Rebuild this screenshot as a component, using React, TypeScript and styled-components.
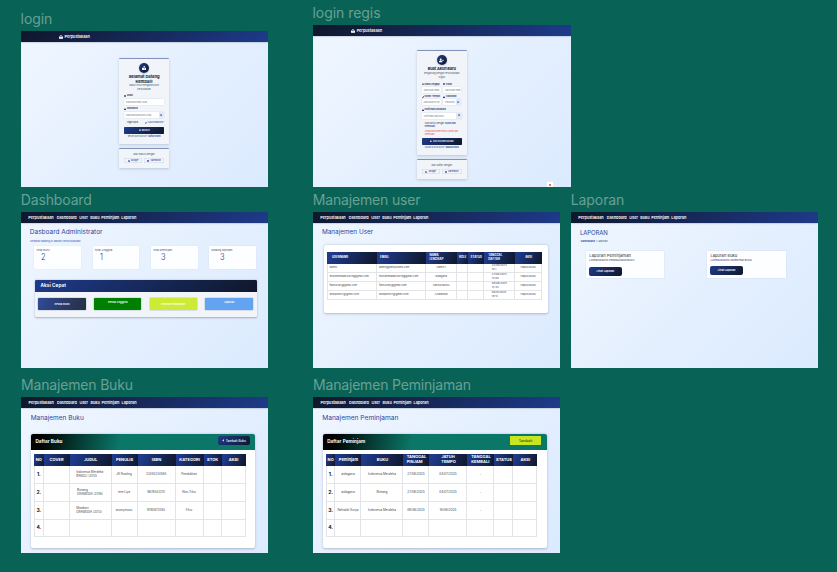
import React from "react";
import styled, { createGlobalStyle } from "styled-components";
import { FaBookReader, FaUserPlus, FaEnvelope, FaLock, FaEye, FaGoogle, FaFacebook, FaSignInAlt, FaKey, FaUser, FaPlus, FaPhone } from "react-icons/fa";

const Global = createGlobalStyle`
  * { box-sizing: border-box; }
  html, body { margin: 0; background: #086256; overflow: hidden; }
  svg { display: block; flex: none; }
`;

const NAVY = "linear-gradient(135deg, #1e3a8a, #0f172a)";

const Canvas = styled.main`
  position: relative;
  width: 837px;
  height: 572px;
  background: #086256;
  font-family: Inter, "Open Sans", sans-serif;
  overflow: hidden;
`;

const Artboard = styled.section<{ $x: number; $y: number }>`
  position: absolute;
  left: ${(p) => p.$x}px;
  top: ${(p) => p.$y}px;
`;

const ArtboardName = styled.h2<{ $ls?: number }>`
  margin: 0 0 4px;
  height: 16px;
  font-size: 14px;
  line-height: 16px;
  font-weight: 400;
  letter-spacing: ${(p) => p.$ls ?? 0}px;
  color: #68a094;
  white-space: nowrap;
`;

const Screen = styled.div<{ $w: number; $h: number }>`
  width: ${(p) => p.$w}px;
  height: ${(p) => p.$h}px;
  background: linear-gradient(135deg, #eff6ff, #dbeafe);
  overflow: hidden;
  position: relative;
`;

const Nav = styled.nav<{ $pad: number }>`
  display: flex;
  align-items: center;
  height: 11px;
  padding-left: ${(p) => p.$pad}px;
  background: linear-gradient(135deg, #0f172a, #1e3a8a);
  box-shadow: 0 0.5px 1.5px rgba(15, 23, 42, 0.35);
  color: #fff;
  font-size: 3.8px;
  font-weight: 600;
  white-space: nowrap;
`;

const NavItem = styled.span<{ $w: number }>`
  width: ${(p) => p.$w}px;
  flex: none;
`;

const Brand = styled.span`
  display: flex;
  align-items: center;
  gap: 1.6px;
`;

const Line = styled.div<{ $mt?: number; $h?: number; $size?: number; $c?: string; $b?: number; $ls?: number; $pl?: number; $center?: boolean }>`
  display: flex;
  align-items: center;
  justify-content: ${(p) => (p.$center ? "center" : "flex-start")};
  gap: 0.8px;
  margin-top: ${(p) => p.$mt ?? 0}px;
  padding-left: ${(p) => p.$pl ?? 0}px;
  height: ${(p) => p.$h ?? 4}px;
  line-height: ${(p) => p.$h ?? 4}px;
  font-size: ${(p) => p.$size ?? 2.2}px;
  font-weight: ${(p) => p.$b ?? 400};
  letter-spacing: ${(p) => p.$ls ?? 0}px;
  color: ${(p) => p.$c ?? "#475569"};
  white-space: nowrap;
`;

const Link = styled.span`
  color: #1e3a8a;
  font-weight: 600;
`;

/* Sign-in and sign-up */
const AuthColumn = styled.div<{ $left: number; $top: number }>`
  width: 50px;
  margin: ${(p) => p.$top}px 0 0 ${(p) => p.$left}px;
`;

const AuthCard = styled.div<{ $h: number; $mt?: number }>`
  height: ${(p) => p.$h}px;
  margin-top: ${(p) => p.$mt ?? 0}px;
  padding: 0 5px;
  border-top: 1px solid #8292bb;
  border-radius: 1px;
  background: #f1f5f9;
  box-shadow: 0 1px 3px rgba(15, 23, 42, 0.18);
`;

const Avatar = styled.div`
  display: flex;
  align-items: center;
  justify-content: center;
  width: 10px;
  height: 10px;
  margin: 4.3px auto 0;
  border-radius: 50%;
  background: ${NAVY};
  color: #fff;
  box-shadow: 0 0.5px 1.5px rgba(30, 58, 138, 0.4);
`;

const Fields = styled.div<{ $cols: string; $gap?: number; $mt?: number }>`
  display: grid;
  grid-template-columns: ${(p) => p.$cols};
  column-gap: ${(p) => p.$gap ?? 0}px;
  margin-top: ${(p) => p.$mt ?? 0}px;
`;

const Input = styled.div`
  display: flex;
  align-items: center;
  justify-content: space-between;
  height: 6px;
  padding-left: 2px;
  border-radius: 0.8px;
  background: #fff;
  box-shadow: 0 0 0 0.4px #dde4ee;
  color: #757b86;
  font-size: 2px;
  white-space: nowrap;
  overflow: hidden;
`;

const Eye = styled.span`
  display: flex;
  align-items: center;
  justify-content: center;
  width: 5.5px;
  height: 100%;
  background: #e2e9f8;
  color: #1e3a8a;
`;

const Submit = styled.div<{ $mt: number }>`
  display: flex;
  align-items: center;
  justify-content: center;
  gap: 1px;
  height: 6.5px;
  margin-top: ${(p) => p.$mt}px;
  border-radius: 0.8px;
  background: ${NAVY};
  color: #fff;
  font-size: 2.1px;
  font-weight: 600;
  white-space: nowrap;
`;

const Social = styled.div`
  display: flex;
  align-items: center;
  justify-content: center;
  gap: 0.8px;
  height: 5px;
  border-radius: 0.8px;
  box-shadow: inset 0 0 0 0.5px #cbd6ea;
  color: #1e3a8a;
  font-size: 2.2px;
  font-weight: 500;
`;

const ScrollBadge = styled.div`
  position: absolute;
  right: 18px;
  bottom: 0;
  width: 6px;
  height: 5px;
  padding: 2px;
  background: #fff;
  &::after {
    content: "";
    display: block;
    width: 2px;
    height: 2px;
    background: #e8794a;
  }
`;

/* Dashboard */
const Stats = styled.div`
  display: flex;
  gap: 11.5px;
  margin: 2.5px 0 0 13.5px;
`;

const Stat = styled.div`
  width: 46.8px;
  height: 23.5px;
  padding: 3.2px 0 0 2px;
  border-radius: 0.7px;
  background: #fdfeff;
  box-shadow: 0 0 1px rgba(100, 120, 160, 0.3);
`;

const StatValue = styled.div<{ $pl: number }>`
  padding-left: ${(p) => p.$pl}px;
  font-size: 9.4px;
  line-height: 10px;
  font-weight: 300;
  color: #1e3a8a;
  & > span {
    display: inline-block;
    transform: scaleX(0.8);
    transform-origin: left;
  }
`;

const Actions = styled.div`
  width: 222px;
  height: 37px;
  margin: 10.5px 0 0 14px;
  border-radius: 1.3px;
  background: #f1f5f9;
  box-shadow: 0 0.7px 2px rgba(15, 23, 42, 0.3);
  overflow: hidden;
`;

const ActionsHead = styled.div`
  height: 12px;
  padding-left: 5.7px;
  background: ${NAVY};
  color: #fff;
  font-size: 4.6px;
  line-height: 12px;
  font-weight: 700;
  letter-spacing: 0.12px;
`;

const ActionRow = styled.div`
  display: grid;
  grid-template-columns: repeat(4, 47.5px);
  gap: 8.2px;
  padding: 6.3px 3.5px;
`;

const Action = styled.div<{ $bg: string; $low?: boolean }>`
  height: 12.3px;
  padding-top: ${(p) => (p.$low ? 1.6 : 0.4)}px;
  border-radius: 0.8px;
  background: ${(p) => p.$bg};
  box-shadow: 0 0 0 0.5px rgba(120, 145, 190, 0.45);
  color: #fff;
  font-size: 2.65px;
  line-height: ${(p) => (p.$low ? 10 : 9.5)}px;
  font-weight: 600;
  text-align: center;
`;

/* Tables */
const Panel = styled.div<{ $ml: number; $mt: number; $h: number }>`
  width: 224.3px;
  height: ${(p) => p.$h}px;
  margin: ${(p) => p.$mt}px 0 0 ${(p) => p.$ml}px;
  border-radius: 2px;
  background: #fff;
  box-shadow: 0 0.7px 2.5px rgba(15, 23, 42, 0.25);
  overflow: hidden;
`;

const PanelHead = styled.div`
  display: flex;
  align-items: center;
  justify-content: space-between;
  height: 16.2px;
  padding: 0 5.5px 0 4.5px;
  background: linear-gradient(100deg, #000 4%, #0b7768 40%, #0b7768);
  color: #fff;
  font-size: 4.6px;
  font-weight: 700;
  letter-spacing: 0.07px;
`;

const HeadButton = styled.div<{ $lime?: boolean }>`
  display: flex;
  align-items: center;
  justify-content: center;
  gap: 1.3px;
  width: 31.8px;
  height: 9px;
  margin-bottom: 2px;
  border-radius: ${(p) => (p.$lime ? 0 : 2)}px;
  background: ${(p) => (p.$lime ? "#c8e620" : NAVY)};
  color: ${(p) => (p.$lime ? "#33401c" : "#fff")};
  font-size: ${(p) => (p.$lime ? 3.6 : 3.1)}px;
  font-weight: 500;
  letter-spacing: 0;
`;

const Table = styled.div<{ $ml: number; $mt: number }>`
  margin: ${(p) => p.$mt}px 0 0 ${(p) => p.$ml}px;
`;

const Row = styled.div<{ $cols: string; $h: number }>`
  display: grid;
  grid-template-columns: ${(p) => p.$cols};
  height: ${(p) => p.$h}px;
`;

const Th = styled.div<{ $size: number; $left?: number }>`
  display: flex;
  align-items: center;
  justify-content: ${(p) => (p.$left ? "flex-start" : "center")};
  padding-left: ${(p) => p.$left ?? 0}px;
  background: linear-gradient(110deg, #1e3a8a 10%, #0f172a);
  color: #fff;
  font-size: ${(p) => p.$size}px;
  line-height: 1.2;
  font-weight: 700;
  white-space: pre;
`;

const Td = styled.div<{ $size: number; $left?: number; $strong?: boolean }>`
  display: flex;
  align-items: center;
  justify-content: ${(p) => (p.$left ? "flex-start" : "center")};
  padding-left: ${(p) => p.$left ?? 0}px;
  border-right: 1px solid #e3e4e8;
  border-bottom: 1px solid #e3e4e8;
  color: ${(p) => (p.$strong ? "#111" : "#44474d")};
  font-size: ${(p) => (p.$strong ? 5 : p.$size)}px;
  font-weight: ${(p) => (p.$strong ? 700 : 400)};
  line-height: 1.45;
  white-space: pre;
  &:first-child {
    border-left: 1px solid #e3e4e8;
  }
`;

/* Reports */
const Reports = styled.div`
  display: flex;
  gap: 42.5px;
  margin: 7.5px 0 0 15px;
`;

const Report = styled.div`
  width: 78.7px;
  height: 27.5px;
  padding: 3.6px 0 0 3.5px;
  background: #fdfeff;
  box-shadow: 0 0 1px rgba(100, 120, 160, 0.3);
`;

const ReportButton = styled.div<{ $mt: number }>`
  width: 32.3px;
  height: 9px;
  margin-top: ${(p) => p.$mt}px;
  border-radius: 2px;
  background: ${NAVY};
  color: #fff;
  font-size: 2.7px;
  line-height: 9px;
  font-weight: 600;
  text-align: center;
`;

const MainNav = ({ pad = 7.5 }: { pad?: number }) => (
  <Nav $pad={pad}>
    <NavItem $w={28.4}>Perpustakaan</NavItem>
    <NavItem $w={22.6}>Dashboard</NavItem>
    <NavItem $w={11}>User</NavItem>
    <NavItem $w={11}>Buku</NavItem>
    <NavItem $w={20}>Peminjam</NavItem>
    <NavItem $w={16}>Laporan</NavItem>
  </Nav>
);

const AuthNav = ({ pad }: { pad: number }) => (
  <Nav $pad={pad}>
    <Brand>
      <FaBookReader size={4} />
      Perpustakaan
    </Brand>
  </Nav>
);

const SocialCard = ({ title }: { title: string }) => (
  <AuthCard $h={20.3} $mt={3.7}>
    <Line $mt={3.9} $h={4} $center $size={2.3}>{title}</Line>
    <Fields $cols="17.8px 20px" $gap={2.2} $mt={1.6}>
      <Social><FaGoogle size={2.2} />Google</Social>
      <Social><FaFacebook size={2.2} />Facebook</Social>
    </Fields>
  </AuthCard>
);

const PageTitle = ({ children, pl, size = 6.7, ls = 0 }: { children: React.ReactNode; pl: number; size?: number; ls?: number }) => (
  <Line $mt={5.5} $h={9} $size={size} $pl={pl} $ls={ls} $c="#2c489c">{children}</Line>
);

type TableProps = {
  cols: string;
  headHeight: number;
  rowHeights: number[];
  headSize: number;
  size: number;
  heads: string[];
  rows: string[][];
  numbered?: boolean;
  headLeft?: (number | undefined)[];
  cellLeft?: (number | undefined)[];
};

const DataTable = ({ cols, headHeight, rowHeights, headSize, size, heads, rows, numbered, headLeft = [], cellLeft = [] }: TableProps) => (
  <>
    <Row $cols={cols} $h={headHeight}>
      {heads.map((h, i) => <Th key={i} $size={headSize} $left={headLeft[i]}>{h}</Th>)}
    </Row>
    {rows.map((r, y) => (
      <Row key={y} $cols={cols} $h={rowHeights[y]}>
        {r.map((c, i) => <Td key={i} $size={size} $left={cellLeft[i]} $strong={numbered && i === 0}>{c}</Td>)}
      </Row>
    ))}
  </>
);

const userRows = [
  ["admin", "admin@perpusweb.com", "Admin 1", "", "", "24/06/2025\n10:1", "Hapus Buku"],
  ["muhammadarul678@gmail.com", "muhammadarul678@gmail.com", "aidagana", "", "", "27/06/2025\n13:00", "Hapus Buku"],
  ["fakhurialy@gmail.com", "fakhurialy@gmail.com", "Fakhurialinux", "", "", "08/06/2025\n13:45", "Hapus Buku"],
  ["andipbrd77@gmail.com", "andipbrd77@gmail.com", "AndiBahar", "", "", "08/10/2025\n19:12", "Hapus Buku"],
];

const bookRows = [
  ["1.", "", "Indonesia Merdeka\nBANGLI (2010)", "JK Rowling", "23455234565", "Pendidikan", "", ""],
  ["2.", "", " Bintang\n GRAMEDIA (2018)", "tere Liye", "9876543210", "Non-Fiksi", "", ""],
  ["3.", "", "Matahari\nGRAMEDIA (2013)", "anonymous", "9780672083", "Fiksi", "", ""],
  ["4.", "", "", "", "", "", "", ""],
];

const loanRows = [
  ["1.", "aidagana", "Indonesia Merdeka", "27/06/2025", "04/07/2025", "-", "", ""],
  ["2.", "aidagana", "Bintang", "27/06/2025", "04/07/2025", "-", "", ""],
  ["3.", "Rafnaldi Surya", "Indonesia Merdeka", "09/06/2025", "16/06/2025", "-", "", ""],
  ["4.", "", "", "", "", "", "", ""],
];

export default function App() {
  return (
    <Canvas>
      <Global />
      <Artboard $x={20.6} $y={11}>
        <ArtboardName $ls={-0.1}>login</ArtboardName>
        <Screen $w={247} $h={156}>
          <AuthNav pad={38.3} />
          <AuthColumn $left={98.5} $top={16}>
            <AuthCard $h={86}>
              <Avatar><FaBookReader size={4.4} /></Avatar>
              <Line $mt={1.8} $h={4.5} $center $size={4.1} $b={700} $c="#172033" $ls={-0.06}>Selamat Datang</Line>
              <Line $h={4.3} $center $size={4} $b={700} $c="#172033">Kembali!</Line>
              <Line $mt={0.6} $h={3.4} $center $size={2.1}>Masuk untuk mengakses akun</Line>
              <Line $h={3.4} $center $size={2.1}>perpustakaan</Line>
              <Line $mt={2.7} $h={4} $size={2.3} $b={600} $c="#172554"><FaEnvelope size={2} />Email</Line>
              <Fields $cols="1fr" $mt={0.9}><Input>Masukkan email Anda</Input></Fields>
              <Line $mt={1.9} $h={4} $size={2.3} $b={600} $c="#172554"><FaLock size={2} />Password</Line>
              <Fields $cols="1fr" $mt={1}><Input>Masukkan password Anda<Eye><FaEye size={2.2} /></Eye></Input></Fields>
              <Fields $cols="18px 1fr" $mt={3}>
                <Line $pl={3} $size={2.2} $c="#172033">Ingat Saya</Line>
                <Line $pl={3} $size={2.1} $c="#1e3a8a"><FaKey size={1.8} />Lupa Password?</Line>
              </Fields>
              <Submit $mt={2.3}><FaSignInAlt size={2.3} />MASUK</Submit>
              <Line $mt={1.8} $center $size={2.15}>Belum punya akun?<Link>Daftar disini</Link></Line>
            </AuthCard>
            <SocialCard title="atau masuk dengan" />
          </AuthColumn>
        </Screen>
      </Artboard>

      <Artboard $x={312.5} $y={5}>
        <ArtboardName $ls={-0.05}>login regis</ArtboardName>
        <Screen $w={258.6} $h={162}>
          <AuthNav pad={38.6} />
          <AuthColumn $left={104.3} $top={14}>
            <AuthCard $h={105}>
              <Avatar><FaUserPlus size={4.8} /></Avatar>
              <Line $mt={1.8} $h={4.5} $center $size={3.9} $b={700} $c="#172033" $ls={-0.1}>Buat Akun Baru</Line>
              <Line $mt={0.6} $h={3.6} $center $size={2.25}>Bergabung dengan Perpustakaan</Line>
              <Line $h={3.4} $center $size={2.2}>Digital</Line>
              <Fields $cols="19px 18px" $gap={2.5} $mt={2.4}>
                <Line $h={5} $size={2.1} $b={600} $c="#172554"><FaUser size={2} />Nama Lengkap</Line>
                <Line $h={5} $size={2.2} $b={600} $c="#172554"><FaEnvelope size={2} />Email</Line>
                <Input>Masukkan nama</Input>
                <Input>Masukkan email</Input>
              </Fields>
              <Fields $cols="19px 18px" $gap={2.5} $mt={1.9}>
                <Line $h={5} $size={2.1} $b={600} $c="#172554"><FaPhone size={2} />Nomor Telepon</Line>
                <Line $h={5} $size={2.2} $b={600} $c="#172554"><FaLock size={2} />Password</Line>
                <Input>Masukkan no hp</Input>
                <Input>Password<Eye><FaEye size={2.2} /></Eye></Input>
              </Fields>
              <Line $mt={2.2} $size={2.1} $b={600} $c="#172554"><FaLock size={2} />Konfirmasi Password</Line>
              <Fields $cols="1fr" $mt={0.9}><Input>Konfirmasi password<Eye><FaEye size={2.2} /></Eye></Input></Fields>
              <Line $mt={3.8} $h={3} $pl={3} $size={2.1} $c="#334155">Saya setuju dengan<Link>Syarat dan</Link></Line>
              <Line $h={3} $pl={3} $size={2.1}><Link>Ketentuan</Link></Line>
              <Line $mt={1.2} $h={3} $pl={3} $size={2.1} $c="#ef4444">Anda harus menyetujui syarat dan</Line>
              <Line $h={3} $pl={3} $size={2.1} $c="#ef4444">ketentuan</Line>
              <Submit $mt={2.6}><FaUserPlus size={2.3} />DAFTAR SEKARANG</Submit>
              <Line $mt={1.4} $center $size={2.2}>Sudah punya akun?<Link>Masuk disini</Link></Line>
            </AuthCard>
            <SocialCard title="atau daftar dengan" />
          </AuthColumn>
          <ScrollBadge />
        </Screen>
      </Artboard>

      <Artboard $x={20.8} $y={191.6}>
        <ArtboardName $ls={-0.15}>Dashboard</ArtboardName>
        <Screen $w={246.9} $h={156}>
          <MainNav />
          <PageTitle pl={9} size={6.5}>Dasboard Administrator</PageTitle>
          <Line $mt={2} $h={4} $pl={9.3} $size={2.7} $c="#3b5bb5">Selamat datang di dasbor perpustakaan</Line>
          <Stats>
            {([["Total Buku", "2", 4.7], ["Total Anggota", "1", 5.5], ["Total peminjam", "3", 8], ["Sedang dipinjam", "3", 9]] as [string, string, number][]).map(([name, value, pl]) => (
              <Stat key={name}>
                <Line $h={3.2} $size={2.7}>{name}</Line>
                <StatValue $pl={pl}><span>{value}</span></StatValue>
              </Stat>
            ))}
          </Stats>
          <Actions>
            <ActionsHead>Aksi Cepat</ActionsHead>
            <ActionRow>
              <Action $bg="linear-gradient(110deg, #304b96, #272f40)" $low>Kelola Buku</Action>
              <Action $bg="#008000">Kelola Anggota</Action>
              <Action $bg="#cdeb35" $low>Kelola Peminjaman</Action>
              <Action $bg="#62a4f2">Laporan</Action>
            </ActionRow>
          </Actions>
        </Screen>
      </Artboard>

      <Artboard $x={312.8} $y={191.6}>
        <ArtboardName $ls={-0.17}>Manajemen user</ArtboardName>
        <Screen $w={247.1} $h={156}>
          <MainNav />
          <PageTitle pl={9.2} size={6.4}>Manajemen User</PageTitle>
          <Panel $ml={11.2} $mt={8.2} $h={68}>
            <Table $ml={3.3} $mt={6.5}>
              <DataTable
                cols="49.7px 49.3px 31px 11px 16px 31px 26.7px"
                headHeight={11.8}
                rowHeights={[9.2, 9.1, 9.1, 9.1]}
                headSize={2.9}
                size={2.65}
                heads={["USERNAME", "EMAIL", "NAMA\nLENGKAP", "ROLE", "STATUS", "TANGGAL\nDAFTAR", "AKSI"]}
                headLeft={[4.7, 3, 3.2, undefined, undefined, 4, undefined]}
                cellLeft={[1.2, 2, undefined, undefined, undefined, 7.5, undefined]}
                rows={userRows}
              />
            </Table>
          </Panel>
        </Screen>
      </Artboard>

      <Artboard $x={570.8} $y={191.6}>
        <ArtboardName $ls={-0.1}>Laporan</ArtboardName>
        <Screen $w={247.2} $h={156}>
          <MainNav />
          <PageTitle pl={9.2} size={6} ls={-0.1}>LAPORAN</PageTitle>
          <Line $mt={2} $h={4} $pl={10} $size={2.7} $c="#475569"><Link>Dashboard</Link>/ Laporan</Line>
          <Reports>
            <Report>
              <Line $h={4.6} $size={4.1} $c="#252a33" $ls={0.07}>Laporan Peminjaman</Line>
              <Line $h={3.4} $size={2.55} $c="#252a33">LAPORAN DATA PEMINJAMAN BUKU</Line>
              <ReportButton $mt={4.6}>Lihat Laporan</ReportButton>
            </Report>
            <Report>
              <Line $h={4.6} $size={4.1} $c="#252a33">Laporan Buku</Line>
              <Line $mt={0.6} $h={3.4} $size={2.55} $c="#252a33">LAPORAN DATA INVENTORI BUKU</Line>
              <ReportButton $mt={3.6}>Lihat Laporan</ReportButton>
            </Report>
          </Reports>
        </Screen>
      </Artboard>

      <Artboard $x={21} $y={377}>
        <ArtboardName $ls={-0.17}>Manajemen Buku</ArtboardName>
        <Screen $w={247} $h={156}>
          <MainNav />
          <PageTitle pl={9.7} size={6.5}>Manajemen Buku</PageTitle>
          <Panel $ml={9.9} $mt={11} $h={114.3}>
            <PanelHead>
              Daftar Buku
              <HeadButton><FaPlus size={2.8} />Tambah Buku</HeadButton>
            </PanelHead>
            <Table $ml={3.2} $mt={4.3}>
              <DataTable
                cols="9.5px 26px 42px 26px 38px 28px 18px 24px"
                headHeight={12}
                rowHeights={[17.7, 18, 18, 17.2]}
                headSize={4}
                size={3}
                heads={["NO", "COVER", "JUDUL", "PENULIS", "ISBN", "KATEGORI", "STOK", "AKSI"]}
                cellLeft={[undefined, undefined, 6.7]}
                rows={bookRows}
                numbered
              />
            </Table>
          </Panel>
        </Screen>
      </Artboard>

      <Artboard $x={313} $y={377}>
        <ArtboardName $ls={-0.18}>Manajemen Peminjaman</ArtboardName>
        <Screen $w={247.2} $h={156}>
          <MainNav />
          <PageTitle pl={9.3} size={6.6}>Manajemen Peminjaman</PageTitle>
          <Panel $ml={9.7} $mt={11} $h={114.3}>
            <PanelHead>
              Daftar Peminjam
              <HeadButton $lime>Tambah</HeadButton>
            </PanelHead>
            <Table $ml={3.2} $mt={4.3}>
              <DataTable
                cols="9.6px 26px 42px 26px 38px 27px 19px 23.6px"
                headHeight={12}
                rowHeights={[17.7, 18, 18, 17.2]}
                headSize={4}
                size={3.1}
                heads={["NO", "Peminjam", "BUKU", "TANGGAL\nPINJAM", "JATUH\nTEMPO", "TANGGAL\nKEMBALI", "STATUS", "AKSI"]}
                rows={loanRows}
                numbered
              />
            </Table>
          </Panel>
        </Screen>
      </Artboard>
    </Canvas>
  );
}
